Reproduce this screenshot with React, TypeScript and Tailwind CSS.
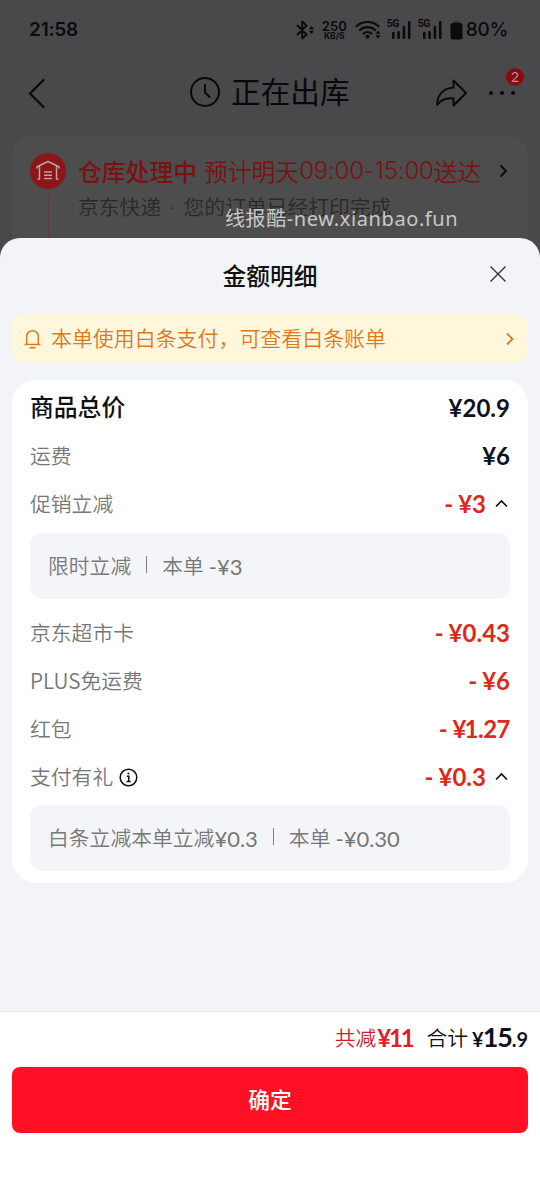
import clsx from "clsx";
import { FC, ReactNode } from "react";

type DetailRow = {
  label: string;
  amount: string;
  bold?: boolean;
  discount?: boolean;
  info?: boolean;
  detail?: { name: string; namePrice?: string; value: string };
};

const rows: DetailRow[] = [
  { label: "商品总价", amount: "20.9", bold: true },
  { label: "运费", amount: "6" },
  { label: "促销立减", amount: "3", discount: true, detail: { name: "限时立减", value: "-¥3" } },
  { label: "京东超市卡", amount: "0.43", discount: true },
  { label: "PLUS免运费", amount: "6", discount: true },
  { label: "红包", amount: "1.27", discount: true },
  { label: "支付有礼", amount: "0.3", discount: true, info: true, detail: { name: "白条立减本单立减", namePrice: "¥0.3", value: "-¥0.30" } },
];

const Signal: FC = () => (
  <div className="relative h-[20px] w-[26px]">
    <span className="absolute -top-px left-0 font-['Roboto',sans-serif] text-[10.5px] leading-[10px] font-bold tracking-[-0.5px]">5G</span>
    <svg className="absolute inset-0" width="26" height="20" viewBox="0 0 26 20" fill="currentColor">
      <rect x="5" y="12" width="2.6" height="7" rx="1" />
      <rect x="10.3" y="11" width="2.6" height="8" rx="1" />
      <rect x="15.6" y="6" width="2.6" height="13" rx="1" />
      <rect x="20.9" y="1" width="2.6" height="18" rx="1" />
    </svg>
  </div>
);

const StatusBar: FC = () => (
  <div className="flex h-[60px] items-center pr-8 pl-[29px] font-['Inter',sans-serif] text-[#0b0b0c]">
    <span className="text-[19px] font-semibold tracking-[-0.2px]">21:58</span>
    <div className="ml-auto flex items-center">
      <svg width="19" height="20" viewBox="0 0 19 20" fill="none" stroke="currentColor" strokeWidth="1.8" strokeLinejoin="round" strokeLinecap="round">
        <path d="M1.5 5.5l9 9-4.3 4V1.5l4.3 4-9 9" />
        <path d="M15.5 6l2.6 3.2h-5.2zM15.5 14l2.6-3.2h-5.2z" fill="currentColor" stroke="none" />
      </svg>
      <div className="ml-[7px] flex w-[25px] flex-col items-center">
        <span className="text-[13px] leading-[11px] font-semibold">250</span>
        <span className="text-[8.5px] leading-[8px] font-bold">KB/S</span>
      </div>
      <svg className="ml-2" width="27" height="20" viewBox="0 0 27 20" fill="none" stroke="currentColor" strokeWidth="2.2" strokeLinecap="round">
        <path d="M1.5 6.2c6-5.6 16-5.6 22 0M5 10c4.2-3.9 10.8-3.9 15 0M8.6 13.6c2.2-2 5.6-2 7.8 0" />
        <circle cx="12.5" cy="16.6" r="2.1" fill="currentColor" stroke="none" />
        <path d="M23 10.5l2.6 3.2h-5.2zM23 18.5l2.6-3.2h-5.2z" fill="currentColor" stroke="none" />
      </svg>
      <div className="ml-[5px] flex gap-[5px]">
        <Signal />
        <Signal />
      </div>
      <svg className="ml-[6px]" width="13" height="20" viewBox="0 0 13 20">
        <path d="M3 4V2.5a1.5 1.5 0 0 1 1.5-1.5h4a1.5 1.5 0 0 1 1.5 1.5V4z" fill="#303031" />
        <rect x="0.5" y="3" width="12" height="16.5" rx="2.5" fill="currentColor" />
      </svg>
      <span className="ml-[3px] text-[19px] font-medium tracking-[-0.3px]">80%</span>
    </div>
  </div>
);

const NavBar: FC = () => (
  <div className="flex h-[66px] items-center text-[#08090a]">
    <svg className="ml-7" width="18" height="30" viewBox="0 0 18 30" fill="none" stroke="currentColor" strokeWidth="2.2" strokeLinecap="round">
      <path d="M15.5 2L2 15.5 15.5 29" />
    </svg>
    <svg className="mb-[2px] ml-[144px]" width="30" height="30" viewBox="0 0 30 30" fill="none" stroke="currentColor" strokeWidth="2" strokeLinecap="round" strokeLinejoin="round">
      <circle cx="15" cy="15" r="14" />
      <path d="M15 8v7.5l4.500 4.500" />
    </svg>
    <span className="mb-1 ml-[11px] text-[29.7px] leading-none">正在出库</span>
    <svg className="ml-auto" width="31" height="28" viewBox="0 0 31 28" fill="none" stroke="currentColor" strokeWidth="2" strokeLinejoin="round">
      <path d="M17.5 1.5L30 14 17.5 26.5V19.500C9 18.500 4.500 21.500 1.200 26 1.200 16 7 9.500 17.500 8.500z" />
    </svg>
    <div className="relative mr-6 ml-[21px] flex w-7 justify-between px-px">
      <i className="size-[4px] rounded-full bg-current" />
      <i className="size-[4px] rounded-full bg-current" />
      <i className="size-[4px] rounded-full bg-current" />
      <span className="absolute -top-[23px] left-[18px] flex size-[18px] items-center justify-center rounded-full bg-[#890a10] font-['Lato',sans-serif] text-[14px] leading-none text-[#a99]">
        2
      </span>
    </div>
  </div>
);

const DeliveryCard: FC = () => (
  <div className="mx-3 mt-[10px] flex h-[130px] rounded-[20px] bg-[#4d4d4d] pl-[18px]">
    <div className="flex w-9 flex-col items-center pt-[17px]">
      <div className="flex size-9 items-center justify-center rounded-full bg-[#8c1518]">
        <svg width="24" height="22" viewBox="0 0 24 22" fill="none" stroke="#b8a4a5" strokeWidth="1.5" strokeLinejoin="round">
          <path d="M1 8.5V6.7L12 1.5l11 5.2v1.8M3.5 6v13H1.5M20.5 6v13h2M8 12h8M8 15.3h8M8 18.5h8" />
        </svg>
      </div>
      <div className="mt-[6px] w-px flex-1 bg-[#5e3c3d]" />
    </div>
    <div className="ml-3 flex-1 whitespace-nowrap">
      <div className="mt-[18px] flex h-[34px] items-center text-[#7c1111]">
        <span className="text-[23.8px] font-medium">仓库处理中</span>
        <span className="ml-[7px] flex items-center text-[23.8px] font-[350]">
          预计明天
          <span className="font-['Inter',sans-serif] text-[24px] font-light tracking-[-0.2px]">09:00-15:00</span>
          送达
        </span>
        <svg className="ml-[18px]" width="9" height="14" viewBox="0 0 9 14" fill="none" stroke="#0a0a0a" strokeWidth="1.9">
          <path d="M1.5 1.5L7 7l-5.500 5.500" />
        </svg>
      </div>
      <p className="text-[20.8px] leading-[36px] font-[350] text-[#292929]">
        京东快递<span className="mx-[3.5px] font-['Roboto',sans-serif]"> · </span>您的订单已经打印完成
      </p>
    </div>
  </div>
);

const Chevron: FC = () => (
  <svg className="mr-[2px] ml-[9px]" width="13" height="10" viewBox="0 0 13 10" fill="none" stroke="#111" strokeWidth="1.7">
    <path d="M1 7.5L6.5 2 12 7.5" />
  </svg>
);

const Price: FC<{ children: ReactNode }> = ({ children }) => (
  <span className="font-['Lato',sans-serif] text-[24px] leading-none font-bold">{children}</span>
);

const AmountRow: FC<{ row: DetailRow }> = ({ row }) => (
  <>
    <div className="flex h-12 items-center">
      <span className={clsx(row.bold ? "pb-[5px] text-[23.8px] font-medium text-[#111]" : "text-[20.8px] font-[350] text-[#777]", !row.bold && !row.detail && "pb-px")}>
        {row.label}
      </span>
      {row.info && (
        <svg className="ml-[6px]" width="19" height="19" viewBox="0 0 19 19" fill="none" stroke="#111" strokeWidth="1.5">
          <circle cx="9.5" cy="9.5" r="8.3" />
          <path d="M7.8 8.2h2v5M7.5 13.5h4.2" />
          <circle cx="9.4" cy="5.5" r="1" fill="#111" stroke="none" />
        </svg>
      )}
      <div className={clsx("ml-auto flex items-center", row.discount ? "text-[#dd2919]" : "text-[#0f121c]")}>
        <Price>
          {row.discount && <span className="mr-[5px]">-</span>}¥<span className={clsx(row.amount.startsWith("1") && "-ml-[2px] tracking-[-0.5px]")}>{row.amount}</span>
        </Price>
        {row.detail && <Chevron />}
      </div>
    </div>
    {row.detail && (
      <div className="mt-[5px] mb-[10px] flex h-[66px] items-center rounded-xl bg-[#f4f5f9] px-[18px] text-[20.8px] font-[350] whitespace-nowrap text-[#777] last:mt-1 last:mb-0">
        <span>{row.detail.name}</span>
        {row.detail.namePrice && <span className="font-['Lato',sans-serif] text-[22px] font-normal">{row.detail.namePrice}</span>}
        <i className="mx-[15px] mb-1 h-[17px] w-px bg-[#808080]" />
        <span>本单</span>
        <span className="ml-[5px] font-['Lato',sans-serif] text-[22px] font-normal">{row.detail.value}</span>
      </div>
    )}
  </>
);

const AmountSheet: FC = () => (
  <section className="absolute inset-x-0 top-[238px] bottom-0 flex flex-col rounded-t-[20px] bg-[#f3f4f8]">
    <header className="relative flex h-[76px] items-center justify-center">
      <h2 className="mb-[2px] text-[23.8px] leading-none font-medium text-[#111]">金额明细</h2>
      <svg className="absolute top-7 right-[34px]" width="16" height="16" viewBox="0 0 16 16" stroke="#333" strokeWidth="1.4">
        <path d="M0.5 0.5l15 15M15.5 0.5l-15 15" />
      </svg>
    </header>

    <div className="mx-3 flex h-[49px] items-center rounded-xl bg-[#fff7dc] pr-[14px] pl-3 text-[#dc7a22]">
      <svg width="17" height="20" viewBox="0 0 17 20" fill="none" stroke="currentColor" strokeWidth="1.5" strokeLinejoin="round">
        <path d="M2.7 15V7.5a5.6 5.6 0 0 1 11.6 0V15M0.5 15.5h16M5.5 18.7h6" />
      </svg>
      <span className="mb-[2px] ml-[10px] text-[20.95px] leading-none font-[350]">本单使用白条支付，可查看白条账单</span>
      <svg className="ml-auto" width="8" height="14" viewBox="0 0 8 14" fill="none" stroke="currentColor" strokeWidth="1.8">
        <path d="M1 1.5L6.5 7 1 12.5" />
      </svg>
    </div>

    <div className="mx-3 mt-[17px] rounded-3xl bg-white px-[18px] pt-1 pb-3">
      {rows.map((row) => (
        <AmountRow key={row.label} row={row} />
      ))}
    </div>

    <footer className="mt-auto h-[177px] border-t border-[#e8e8ea] bg-white px-3">
      <div className="flex h-[55px] items-center justify-end pb-[3px]">
        <span className="text-[20.8px] font-[350] text-[#d51c2d]">共减</span>
        <Price>
          <span className="ml-px tracking-[-2.2px] text-[#e31b2c]">¥11</span>
        </Price>
        <span className="ml-[14px] text-[20.8px] font-[350] text-[#111]">合计</span>
        <div className="mb-1 ml-[4px] flex items-baseline font-['Lato',sans-serif] leading-none font-bold text-[#0f121c]">
          <span className="text-[20px]">¥</span>
          <span className="-ml-px text-[27px] tracking-[-1.2px]">15</span>
          <span className="text-[20px]">.9</span>
        </div>
      </div>
      <button className="h-[66px] w-full rounded-lg bg-[#ff1024] pb-[2px] text-[21.8px] font-medium text-white">确定</button>
    </footer>
  </section>
);

const App: FC = () => (
  <main className="relative h-[1188px] w-[540px] overflow-hidden bg-[#49494b] font-['Noto_Sans_CJK_SC',sans-serif]">
    <StatusBar />
    <NavBar />
    <DeliveryCard />
    <AmountSheet />
    <span className="absolute top-[205px] left-[225px] font-['Noto_Sans','Noto_Sans_CJK_SC',sans-serif] text-[20px] leading-7 tracking-[0.6px] whitespace-nowrap text-[#c8c8c8]">
      线报酷-new.xianbao.fun
    </span>
  </main>
);

export default App;
